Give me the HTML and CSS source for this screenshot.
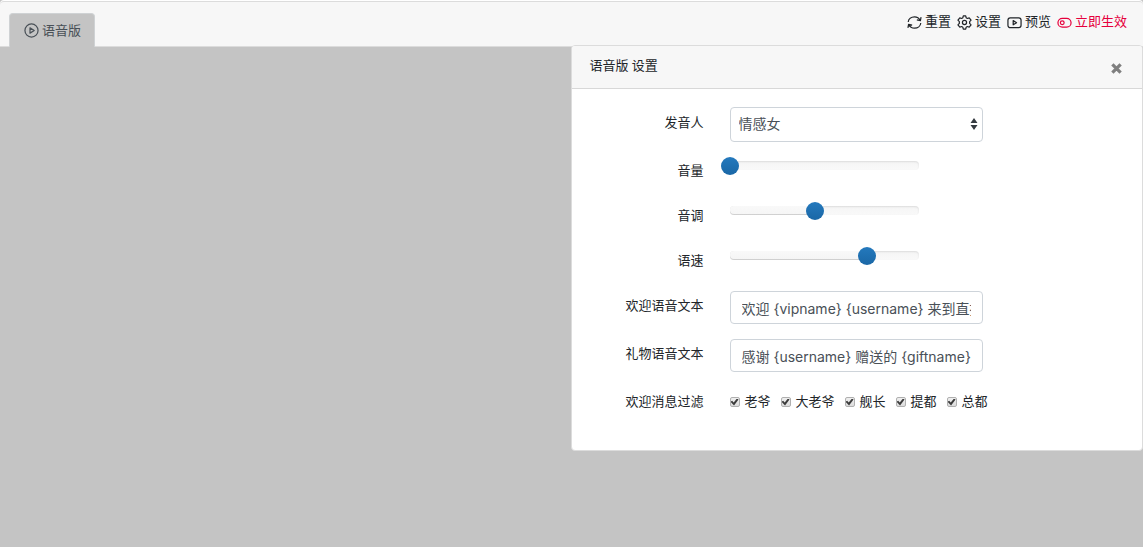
FILE: index.html
```html
<!DOCTYPE html>
<html lang="zh-CN">
<head>
<meta charset="utf-8">
<title>语音版 设置</title>
<link rel="stylesheet" href="styles.css">
</head>
<body>
<div class="workspace">
  <header class="topbar">
    <nav class="tabs">
      <a class="tab" href="#voice">
        <svg class="icon icon-tab" viewBox="0 0 16 16"><circle cx="8" cy="8" r="7"/><path d="M6.400 5.200v5.600L10.900 8z"/></svg>
        语音版
      </a>
    </nav>
    <div class="actions">
      <a class="action" href="#reset">
        <svg class="icon" viewBox="0 0 16 16"><path d="M1.300 7.500C1.600 4.200 4.500 2 8 2c2.700 0 4.900 1.300 6 3.700M15 2.200l-.7 3.800-3.800-.7M14.700 8.500c-.3 3.300-3.200 5.500-6.700 5.500-2.700 0-4.900-1.300-6-3.700M1 13.800l.7-3.800 3.800.7"/></svg>
        重置
      </a>
      <a class="action" href="#settings">
        <svg class="icon" viewBox="0 0 16 16"><path d="M6.700 1h2.600l.5 2 1.200.7 2-.6 2 2.400-1.500 1.500v2l1.500 1.500-2 2.400-2-.6-1.200.7-.5 2H6.700l-.5-2-1.200-.7-2 .6-2-2.400L2.500 9V7L1 5.500l2-2.400 2 .6L6.200 3z"/><circle cx="8" cy="8" r="2.200"/></svg>
        设置
      </a>
      <a class="action" href="#preview">
        <svg class="icon" viewBox="0 0 16 16"><rect x="1" y="3" width="14" height="10.500" rx="2.500"/><path d="M6.600 6v4.500l3.600-2.250z"/></svg>
        预览
      </a>
      <a class="action action-apply" href="#apply">
        <svg class="icon" viewBox="0 0 16 16"><rect x="1" y="3.500" width="14" height="9.500" rx="4.750"/><circle cx="5.600" cy="8.250" r="2"/></svg>
        立即生效
      </a>
    </div>
  </header>

  <section class="panel">
    <div class="panel-header">
      <h1 class="panel-title">语音版 设置</h1>
      <button class="close" type="button" aria-label="关闭">
        <svg class="close-icon" viewBox="0 0 12 12"><path d="M2.200 2.200l7.600 7.600M9.800 2.200L2.200 9.800"/></svg>
      </button>
    </div>
    <form class="form">
      <div class="row">
        <label class="label" for="speaker">发音人</label>
        <div class="select-wrap">
          <select class="field select" id="speaker"><option>情感女</option></select>
          <svg class="select-arrows" viewBox="0 0 8 14"><path d="M4 1l3.500 5h-7zM4 13L.5 8h7z"/></svg>
        </div>
      </div>
      <div class="row row-slider">
        <label class="label" for="volume">音量</label>
        <div class="slider"><span class="slider-fill" style="width:0%"></span><input class="range" id="volume" type="range" min="0" max="100" step="0.5" value="0"></div>
      </div>
      <div class="row row-slider">
        <label class="label" for="pitch">音调</label>
        <div class="slider"><span class="slider-fill" style="width:45.5%"></span><input class="range" id="pitch" type="range" min="0" max="100" step="0.5" value="45.5"></div>
      </div>
      <div class="row row-slider">
        <label class="label" for="speed">语速</label>
        <div class="slider"><span class="slider-fill" style="width:73%"></span><input class="range" id="speed" type="range" min="0" max="100" step="0.5" value="73"></div>
      </div>
      <div class="row row-text">
        <label class="label" for="welcome">欢迎语音文本</label>
        <input class="field text" id="welcome" type="text" value="欢迎 {vipname} {username} 来到直播间">
      </div>
      <div class="row row-text">
        <label class="label" for="gift">礼物语音文本</label>
        <input class="field text" id="gift" type="text" value="感谢 {username} 赠送的 {giftname}">
      </div>
      <div class="row">
        <span class="label" id="filter">欢迎消息过滤</span>
        <div class="checks" role="group" aria-labelledby="filter">
          <label class="check"><input class="checkbox" type="checkbox" checked>老爷</label>
          <label class="check"><input class="checkbox" type="checkbox" checked>大老爷</label>
          <label class="check"><input class="checkbox" type="checkbox" checked>舰长</label>
          <label class="check"><input class="checkbox" type="checkbox" checked>提都</label>
          <label class="check"><input class="checkbox" type="checkbox" checked>总都</label>
        </div>
      </div>
    </form>
  </section>
</div>
</body>
</html>
```

FILE: styles.css
```css
* { box-sizing: border-box; }

body {
  margin: 0;
  background: #c4c4c4;
  color: #212529;
  font: 13px/20px Roboto, "Noto Sans CJK SC", sans-serif;
}

.workspace {
  position: relative;
  min-height: 100vh;
  padding-top: 1px;
}

.topbar {
  display: flex;
  justify-content: space-between;
  align-items: flex-end;
  height: 46px;
  padding: 0 16px 0 9px;
  background: #f7f7f7;
  border: 1px solid #dcdcdc;
  border-width: 1px 0;
  border-radius: 4px 4px 0 0;
  box-shadow: 0 -1px 0 #fff;
}

.tabs { display: flex; margin-bottom: -1px; }

.tab {
  display: flex;
  align-items: center;
  gap: 3px;
  height: 34px;
  padding: 0 13px 0 14px;
  border: 1px solid #cfd2d4;
  border-bottom: 0;
  border-radius: 4px 4px 0 0;
  background: #c4c4c4;
  color: #495057;
  text-decoration: none;
}

.actions { display: flex; gap: 6px; padding-bottom: 14px; }

.action {
  display: flex;
  align-items: center;
  gap: 3px;
  color: #212529;
  text-decoration: none;
}

.action-apply { color: #e6003c; }

.icon {
  width: 15px;
  height: 15px;
  fill: none;
  stroke: currentColor;
  stroke-width: 1.3;
  stroke-linejoin: round;
}

.panel {
  position: absolute;
  top: 45px;
  right: 0;
  width: calc(50% + 1px);
  background: #fff;
  border: 1px solid #dcdcdc;
  border-radius: 4px;
}

.panel-header {
  display: flex;
  justify-content: space-between;
  align-items: center;
  height: 43px;
  padding: 2px 19px 0 18px;
  background: #f7f7f7;
  border-bottom: 1px solid #d8d8d8;
  border-radius: 3px 3px 0 0;
}

.panel-title {
  margin: 0 0 4px;
  font-size: 13px;
  font-weight: 400;
}

.close {
  display: flex;
  padding: 0;
  border: 0;
  background: none;
}

.close-icon {
  width: 13px;
  height: 13px;
  stroke: #7f7f7f;
  stroke-width: 3;
}

.form {
  display: grid;
  gap: 13px;
  padding: 18px 20px 29px 0;
}

.row {
  display: grid;
  grid-template-columns: 132px 1fr;
  column-gap: 26px;
  align-items: start;
  min-height: 35px;
}

.row-slider { min-height: 32px; }
.row-text { align-items: center; }
.row-text .label { padding: 0 0 4px; }

.label { padding-top: 6px; text-align: right; }

.field {
  width: 100%;
  border: 1px solid #ced4da;
  border-radius: 4px;
  background: #fff;
  color: #495057;
  font: 14px/20px Inter, "Noto Sans CJK SC", sans-serif;
}

.select-wrap { position: relative; max-width: 253px; }

.select {
  display: block;
  height: 35px;
  padding: 0 24px 2px 8px;
  appearance: none;
}

.select-arrows {
  position: absolute;
  top: 10px;
  right: 5px;
  width: 8px;
  height: 14px;
  fill: #343a40;
  pointer-events: none;
}

.text {
  max-width: 253px;
  height: 33px;
  padding: 0 11px;
}

.slider {
  position: relative;
  display: flex;
  align-items: center;
  width: 189px;
  height: 9px;
  margin-top: 6px;
  border-radius: 4px;
  background: linear-gradient(#f5f5f5, #f9f9f9);
  box-shadow: inset 0 1px 2px rgba(0, 0, 0, 0.1);
}

.slider-fill {
  position: absolute;
  inset: 0 auto 0 0;
  border-radius: 4px;
  background: linear-gradient(#f9f9f9, #f5f5f5);
  box-shadow: inset 0 -1px 0 rgba(0, 0, 0, 0.15);
}

.range {
  position: relative;
  flex: 0 0 207px;
  height: 18px;
  margin: 0 -9px;
  appearance: none;
  background: none;
}

.range::-webkit-slider-thumb {
  appearance: none;
  width: 18px;
  height: 18px;
  border-radius: 50%;
  background: linear-gradient(#2479bd, #1a67a6);
}

.checks { display: flex; flex-wrap: wrap; gap: 10px; padding-top: 6px; }

.check { display: flex; align-items: center; gap: 5px; }

.checkbox {
  display: grid;
  place-items: center;
  width: 10px;
  height: 10px;
  margin: 0;
  appearance: none;
  border: 1px solid #b0b0b0;
  border-radius: 2px;
  background: linear-gradient(#efefef, #dcdcdc);
}

.checkbox:checked::before {
  content: "";
  width: 8px;
  height: 7px;
  background: #3c3c3c;
  clip-path: polygon(0 48%, 20% 32%, 40% 58%, 80% 0, 100% 14%, 44% 100%);
}
```
